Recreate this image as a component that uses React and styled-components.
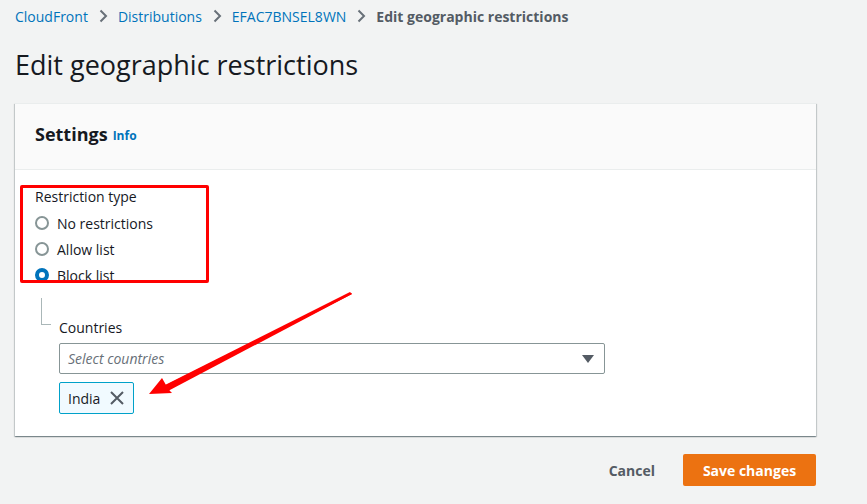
import React from "react";
import styled, { createGlobalStyle } from "styled-components";

const GlobalStyle = createGlobalStyle`
  html, body {
    margin: 0;
    padding: 0;
    background: #f2f3f3;
    font-family: "Open Sans", "Noto Sans", Arial, sans-serif;
    color: #16191f;
  }
  * { box-sizing: border-box; }
`;

const crumbs = ["CloudFront", "Distributions", "EFAC7BNSEL8WN"];
const options = [
  { label: "No restrictions", checked: false },
  { label: "Allow list", checked: false },
  { label: "Block list", checked: true },
];

const Chevron = () => (
  <svg width="16" height="16" viewBox="0 0 16 16">
    <path d="M5.5 2.5 L11 8 L5.5 13.5" fill="none" stroke="#687078" strokeWidth="2" />
  </svg>
);

const App = () => {
  return (
    <Page>
      <GlobalStyle />
      <Breadcrumbs>
        {crumbs.map((c) => (
          <React.Fragment key={c}>
            <CrumbLink>{c}</CrumbLink>
            <Chevron />
          </React.Fragment>
        ))}
        <CrumbCurrent>Edit geographic restrictions</CrumbCurrent>
      </Breadcrumbs>

      <Title>Edit geographic restrictions</Title>

      <Card>
        <CardHeader>
          <CardTitle>Settings</CardTitle>
          <InfoLink>Info</InfoLink>
        </CardHeader>
        <CardBody>
          <FieldLabel>Restriction type</FieldLabel>
          <RadioGroup>
            {options.map((o) => (
              <RadioRow key={o.label}>
                <RadioDot $checked={o.checked} />
                <RadioText>{o.label}</RadioText>
              </RadioRow>
            ))}
          </RadioGroup>

          <Nested>
            <TreeLine />
            <NestedField>
              <FieldLabel>Countries</FieldLabel>
              <SelectBox>
                <Placeholder>Select countries</Placeholder>
                <svg width="14" height="10" viewBox="0 0 14 10">
                  <path d="M1 1 L13 1 L7 9 Z" fill="#545b64" />
                </svg>
              </SelectBox>
              <Token>
                <span>India</span>
                <svg width="16" height="16" viewBox="0 0 16 16">
                  <path d="M2 2 L14 14 M14 2 L2 14" stroke="#545b64" strokeWidth="2" fill="none" />
                </svg>
              </Token>
            </NestedField>
          </Nested>

          <Highlight />
          <Arrow width="220" height="120" viewBox="0 0 220 120">
            <polygon points="212,13 24,109 22,106 211,12" fill="#ff0000" />
            <polygon points="212,13 28,110 25,104 210,11" fill="#ff0000" />
            <polygon points="9,113 22,97 26,104 30,110 32,112" fill="#ff0000" />
          </Arrow>
        </CardBody>
      </Card>

      <Footer>
        <CancelButton>Cancel</CancelButton>
        <PrimaryButton>Save changes</PrimaryButton>
      </Footer>
    </Page>
  );
};

const Page = styled.div`
  width: 867px;
  height: 504px;
  padding: 0 51px 0 15px;
  overflow: hidden;
`;

const Breadcrumbs = styled.nav`
  height: 32px;
  display: flex;
  align-items: center;
  gap: 7px;
  font-size: 14px;
`;

const CrumbLink = styled.span`
  color: #0073bb;
`;

const CrumbCurrent = styled.span`
  color: #545b64;
  font-weight: 700;
`;

const Title = styled.h1`
  margin: 0;
  height: 71px;
  display: flex;
  align-items: center;
  font-size: 27px;
  font-weight: 400;
  color: #16191f;
  padding-bottom: 6px;
`;

const Card = styled.section`
  background: #ffffff;
  box-shadow: 0 1px 1px 0 rgba(0, 28, 36, 0.3), 1px 1px 1px 0 rgba(0, 28, 36, 0.15),
    -1px 1px 1px 0 rgba(0, 28, 36, 0.15);
  border-top: 1px solid #eaeded;
`;

const CardHeader = styled.header`
  height: 66px;
  background: #fafafa;
  border-bottom: 1px solid #eaeded;
  display: flex;
  align-items: center;
  gap: 5px;
  padding: 0 20px 5px;
`;

const CardTitle = styled.h2`
  margin: 0;
  font-size: 18px;
  font-weight: 700;
`;

const InfoLink = styled.span`
  color: #0073bb;
  font-size: 12px;
  font-weight: 700;
  margin-top: 3px;
`;

const CardBody = styled.div`
  position: relative;
  padding: 16px 20px 22px;
`;

const FieldLabel = styled.div`
  font-size: 14px;
  line-height: 22px;
  color: #16191f;
`;

const RadioGroup = styled.div`
  display: flex;
  flex-direction: column;
  margin-top: 2px;
`;

const RadioRow = styled.div`
  display: flex;
  align-items: center;
  height: 26px;
  gap: 8px;
`;

const RadioDot = styled.span`
  width: 14px;
  height: 14px;
  border-radius: 50%;
  border: ${(p) => (p.$checked ? "4px solid #0073bb" : "2px solid #879596")};
  background: #ffffff;
  flex: none;
`;

const RadioText = styled.span`
  font-size: 14px;
  color: #16191f;
`;

const Nested = styled.div`
  display: flex;
  margin-top: 10px;
`;

const TreeLine = styled.div`
  width: 10px;
  height: 27px;
  margin-left: 6px;
  border-left: 1px solid #aab7b8;
  border-bottom: 1px solid #aab7b8;
  flex: none;
`;

const NestedField = styled.div`
  margin-left: 8px;
  padding-top: 19px;
  display: flex;
  flex-direction: column;
  align-items: flex-start;
`;

const SelectBox = styled.div`
  margin-top: 4px;
  width: 546px;
  height: 31px;
  border: 1px solid #879596;
  border-radius: 2px;
  display: flex;
  align-items: center;
  justify-content: space-between;
  padding: 0 9px 0 8px;
`;

const Placeholder = styled.span`
  font-style: italic;
  font-size: 14px;
  color: #687078;
`;

const Token = styled.div`
  margin-top: 8px;
  height: 32px;
  display: flex;
  align-items: center;
  gap: 9px;
  padding: 0 8px;
  background: #f1faff;
  border: 1px solid #00a1c9;
  border-radius: 2px;
  font-size: 14px;
  color: #16191f;
`;

const Highlight = styled.div`
  position: absolute;
  left: 5px;
  top: 15px;
  width: 189px;
  height: 98px;
  border: 3px solid #ff0000;
  border-radius: 2px;
  pointer-events: none;
`;

const Arrow = styled.svg`
  position: absolute;
  left: 125px;
  top: 111px;
  pointer-events: none;
`;

const Footer = styled.div`
  display: flex;
  justify-content: flex-end;
  align-items: center;
  gap: 28px;
  margin-top: 18px;
`;

const CancelButton = styled.span`
  font-size: 14px;
  font-weight: 700;
  color: #545b64;
`;

const PrimaryButton = styled.button`
  width: 133px;
  height: 32px;
  background: #ec7211;
  border: none;
  border-radius: 2px;
  color: #ffffff;
  font-family: inherit;
  font-size: 14px;
  font-weight: 700;
`;

export default App;
